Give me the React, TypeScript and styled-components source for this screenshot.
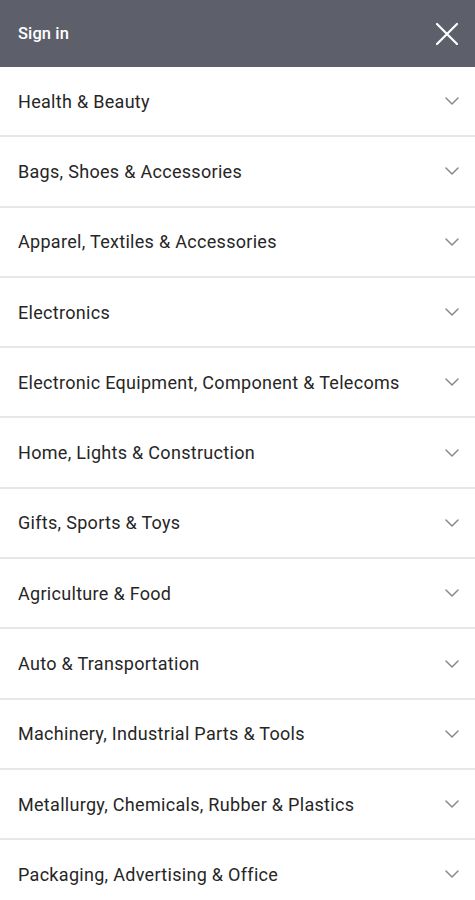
import React from 'react';
import styled, { createGlobalStyle } from 'styled-components';

const GlobalStyle = createGlobalStyle`
  html, body {
    margin: 0;
    padding: 0;
    background: #ffffff;
    font-family: Roboto, "Noto Sans", Arial, sans-serif;
  }
`;

const Drawer = styled.nav`
  width: 475px;
  background: #ffffff;
`;

const Header = styled.header`
  height: 67px;
  background: #5d5f6b;
  display: flex;
  align-items: center;
  justify-content: space-between;
  padding: 0 16px 0 18px;
  box-sizing: border-box;
`;

const SignIn = styled.span`
  color: #ffffff;
  font-size: 16.5px;
  font-weight: 500;
  letter-spacing: 0.1px;
`;

const CloseButton = styled.button`
  background: none;
  border: none;
  padding: 0;
  width: 24px;
  height: 24px;
  display: flex;
  align-items: center;
  justify-content: center;
  cursor: pointer;
`;

const List = styled.ul`
  list-style: none;
  margin: 0;
  padding: 0;
`;

const Row = styled.li`
  height: 70.3px;
  box-sizing: border-box;
  border-bottom: 2px solid #e7e7e7;
  display: flex;
  align-items: center;
  justify-content: space-between;
  padding: 0 16px 0 18px;
`;

const Label = styled.span`
  color: #262626;
  font-size: 18px;
  letter-spacing: 0.3px;
`;

const Chevron = () => (
  <svg width="14" height="8" viewBox="0 0 14 8" fill="none">
    <path d="M1 1 L7 7 L13 1" stroke="#8a8a8a" strokeWidth="1.5" strokeLinecap="round" strokeLinejoin="round" />
  </svg>
);

const categories = [
  'Health & Beauty',
  'Bags, Shoes & Accessories',
  'Apparel, Textiles & Accessories',
  'Electronics',
  'Electronic Equipment, Component & Telecoms',
  'Home, Lights & Construction',
  'Gifts, Sports & Toys',
  'Agriculture & Food',
  'Auto & Transportation',
  'Machinery, Industrial Parts & Tools',
  'Metallurgy, Chemicals, Rubber & Plastics',
  'Packaging, Advertising & Office',
];

const App: React.FC = () => (
  <>
    <GlobalStyle />
    <Drawer>
      <Header>
        <SignIn>Sign in</SignIn>
        <CloseButton aria-label="Close">
          <svg width="24" height="24" viewBox="0 0 24 24" fill="none">
            <path d="M2 2 L22 22 M22 2 L2 22" stroke="#ffffff" strokeWidth="2.2" strokeLinecap="round" />
          </svg>
        </CloseButton>
      </Header>
      <List>
        {categories.map((c) => (
          <Row key={c}>
            <Label>{c}</Label>
            <Chevron />
          </Row>
        ))}
      </List>
    </Drawer>
  </>
);

export default App;
